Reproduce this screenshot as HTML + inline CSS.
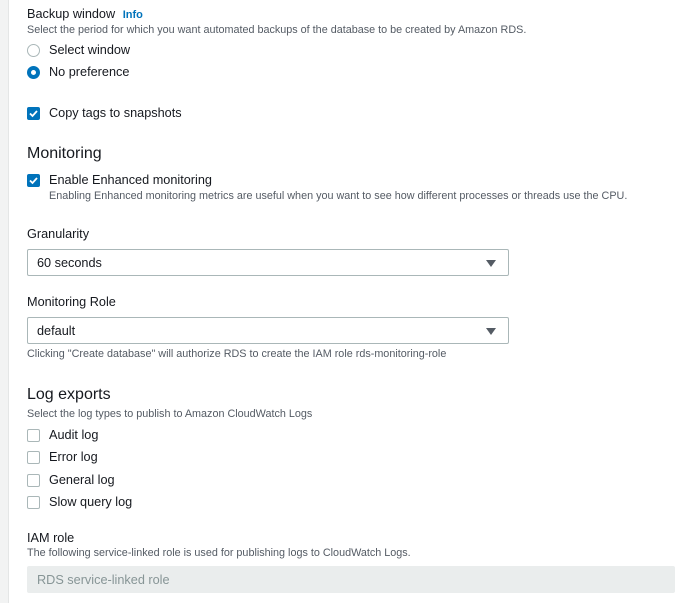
<!DOCTYPE html>
<html><head><style>
body{margin:0;width:688px;height:603px;background:#fff;font-family:"Liberation Sans",sans-serif;color:#16191f;position:relative;overflow:hidden}
.strip{position:absolute;left:0;top:0;width:8px;height:603px;background:#f2f3f3;border-right:1px solid #e4e6e6}
.a{position:absolute;white-space:nowrap}
.l{font-size:12.7px;margin-top:1px}
.d{font-size:10.8px;color:#545b64;margin-top:1px}
.h{font-size:16px;margin-top:1px}
.rad{position:absolute;width:13px;height:13px;border-radius:50%;box-sizing:border-box}
.cb{position:absolute;width:13px;height:13px;box-sizing:border-box;border-radius:2px}
.cb.off{border:1px solid #aab7b8;background:#fff}
.cb.on{background:#0073bb}
.sel{position:absolute;left:27px;width:482px;height:27px;box-sizing:border-box;border:1px solid #aab7b8;border-radius:2px;font-size:12.7px;padding:6px 9px}
.tri{position:absolute;right:12px;top:10px;width:0;height:0;border-left:5px solid transparent;border-right:5px solid transparent;border-top:7px solid #545b64}
</style></head><body>
<div class="strip"></div>
<div class="a l" style="left:27px;top:6px">Backup window <b style="color:#0073bb;font-size:11px;margin-left:4px">Info</b></div>
<div class="a d" style="left:27px;top:23px">Select the period for which you want automated backups of the database to be created by Amazon RDS.</div>
<div class="rad" style="left:27px;top:44px;border:1px solid #aab7b8"></div>
<div class="a l" style="left:49px;top:42px">Select window</div>
<div class="rad" style="left:27px;top:66px;border:4px solid #0073bb"></div>
<div class="a l" style="left:49px;top:64px">No preference</div>
<svg class="cb on" style="left:27px;top:107px" viewBox="0 0 13 13"><path d="M3 6.5l2.5 2.5 4.5-5" stroke="#fff" stroke-width="1.8" fill="none"/></svg>
<div class="a l" style="left:49px;top:105px">Copy tags to snapshots</div>
<div class="a h" style="left:27px;top:144px">Monitoring</div>
<svg class="cb on" style="left:27px;top:174px" viewBox="0 0 13 13"><path d="M3 6.5l2.5 2.5 4.5-5" stroke="#fff" stroke-width="1.8" fill="none"/></svg>
<div class="a l" style="left:49px;top:172px">Enable Enhanced monitoring</div>
<div class="a d" style="left:49px;top:189px">Enabling Enhanced monitoring metrics are useful when you want to see how different processes or threads use the CPU.</div>
<div class="a l" style="left:27px;top:226px">Granularity</div>
<div class="sel" style="top:249px">60 seconds<div class="tri"></div></div>
<div class="a l" style="left:27px;top:294px">Monitoring Role</div>
<div class="sel" style="top:317px">default<div class="tri"></div></div>
<div class="a d" style="left:27px;top:347px">Clicking "Create database" will authorize RDS to create the IAM role rds-monitoring-role</div>
<div class="a h" style="left:27px;top:385px">Log exports</div>
<div class="a d" style="left:27px;top:407px">Select the log types to publish to Amazon CloudWatch Logs</div>
<div class="cb off" style="left:27px;top:429px"></div><div class="a l" style="left:49px;top:427px">Audit log</div>
<div class="cb off" style="left:27px;top:451px"></div><div class="a l" style="left:49px;top:449px">Error log</div>
<div class="cb off" style="left:27px;top:474px"></div><div class="a l" style="left:49px;top:472px">General log</div>
<div class="cb off" style="left:27px;top:496px"></div><div class="a l" style="left:49px;top:494px">Slow query log</div>
<div class="a l" style="left:27px;top:530px">IAM role</div>
<div class="a d" style="left:27px;top:546px">The following service-linked role is used for publishing logs to CloudWatch Logs.</div>
<div style="position:absolute;left:27px;top:566px;width:648px;height:27px;background:#eaeded;border-radius:2px;font-size:12.7px;color:#879596;box-sizing:border-box;padding:7px 10px">RDS service-linked role</div>
</body></html>
